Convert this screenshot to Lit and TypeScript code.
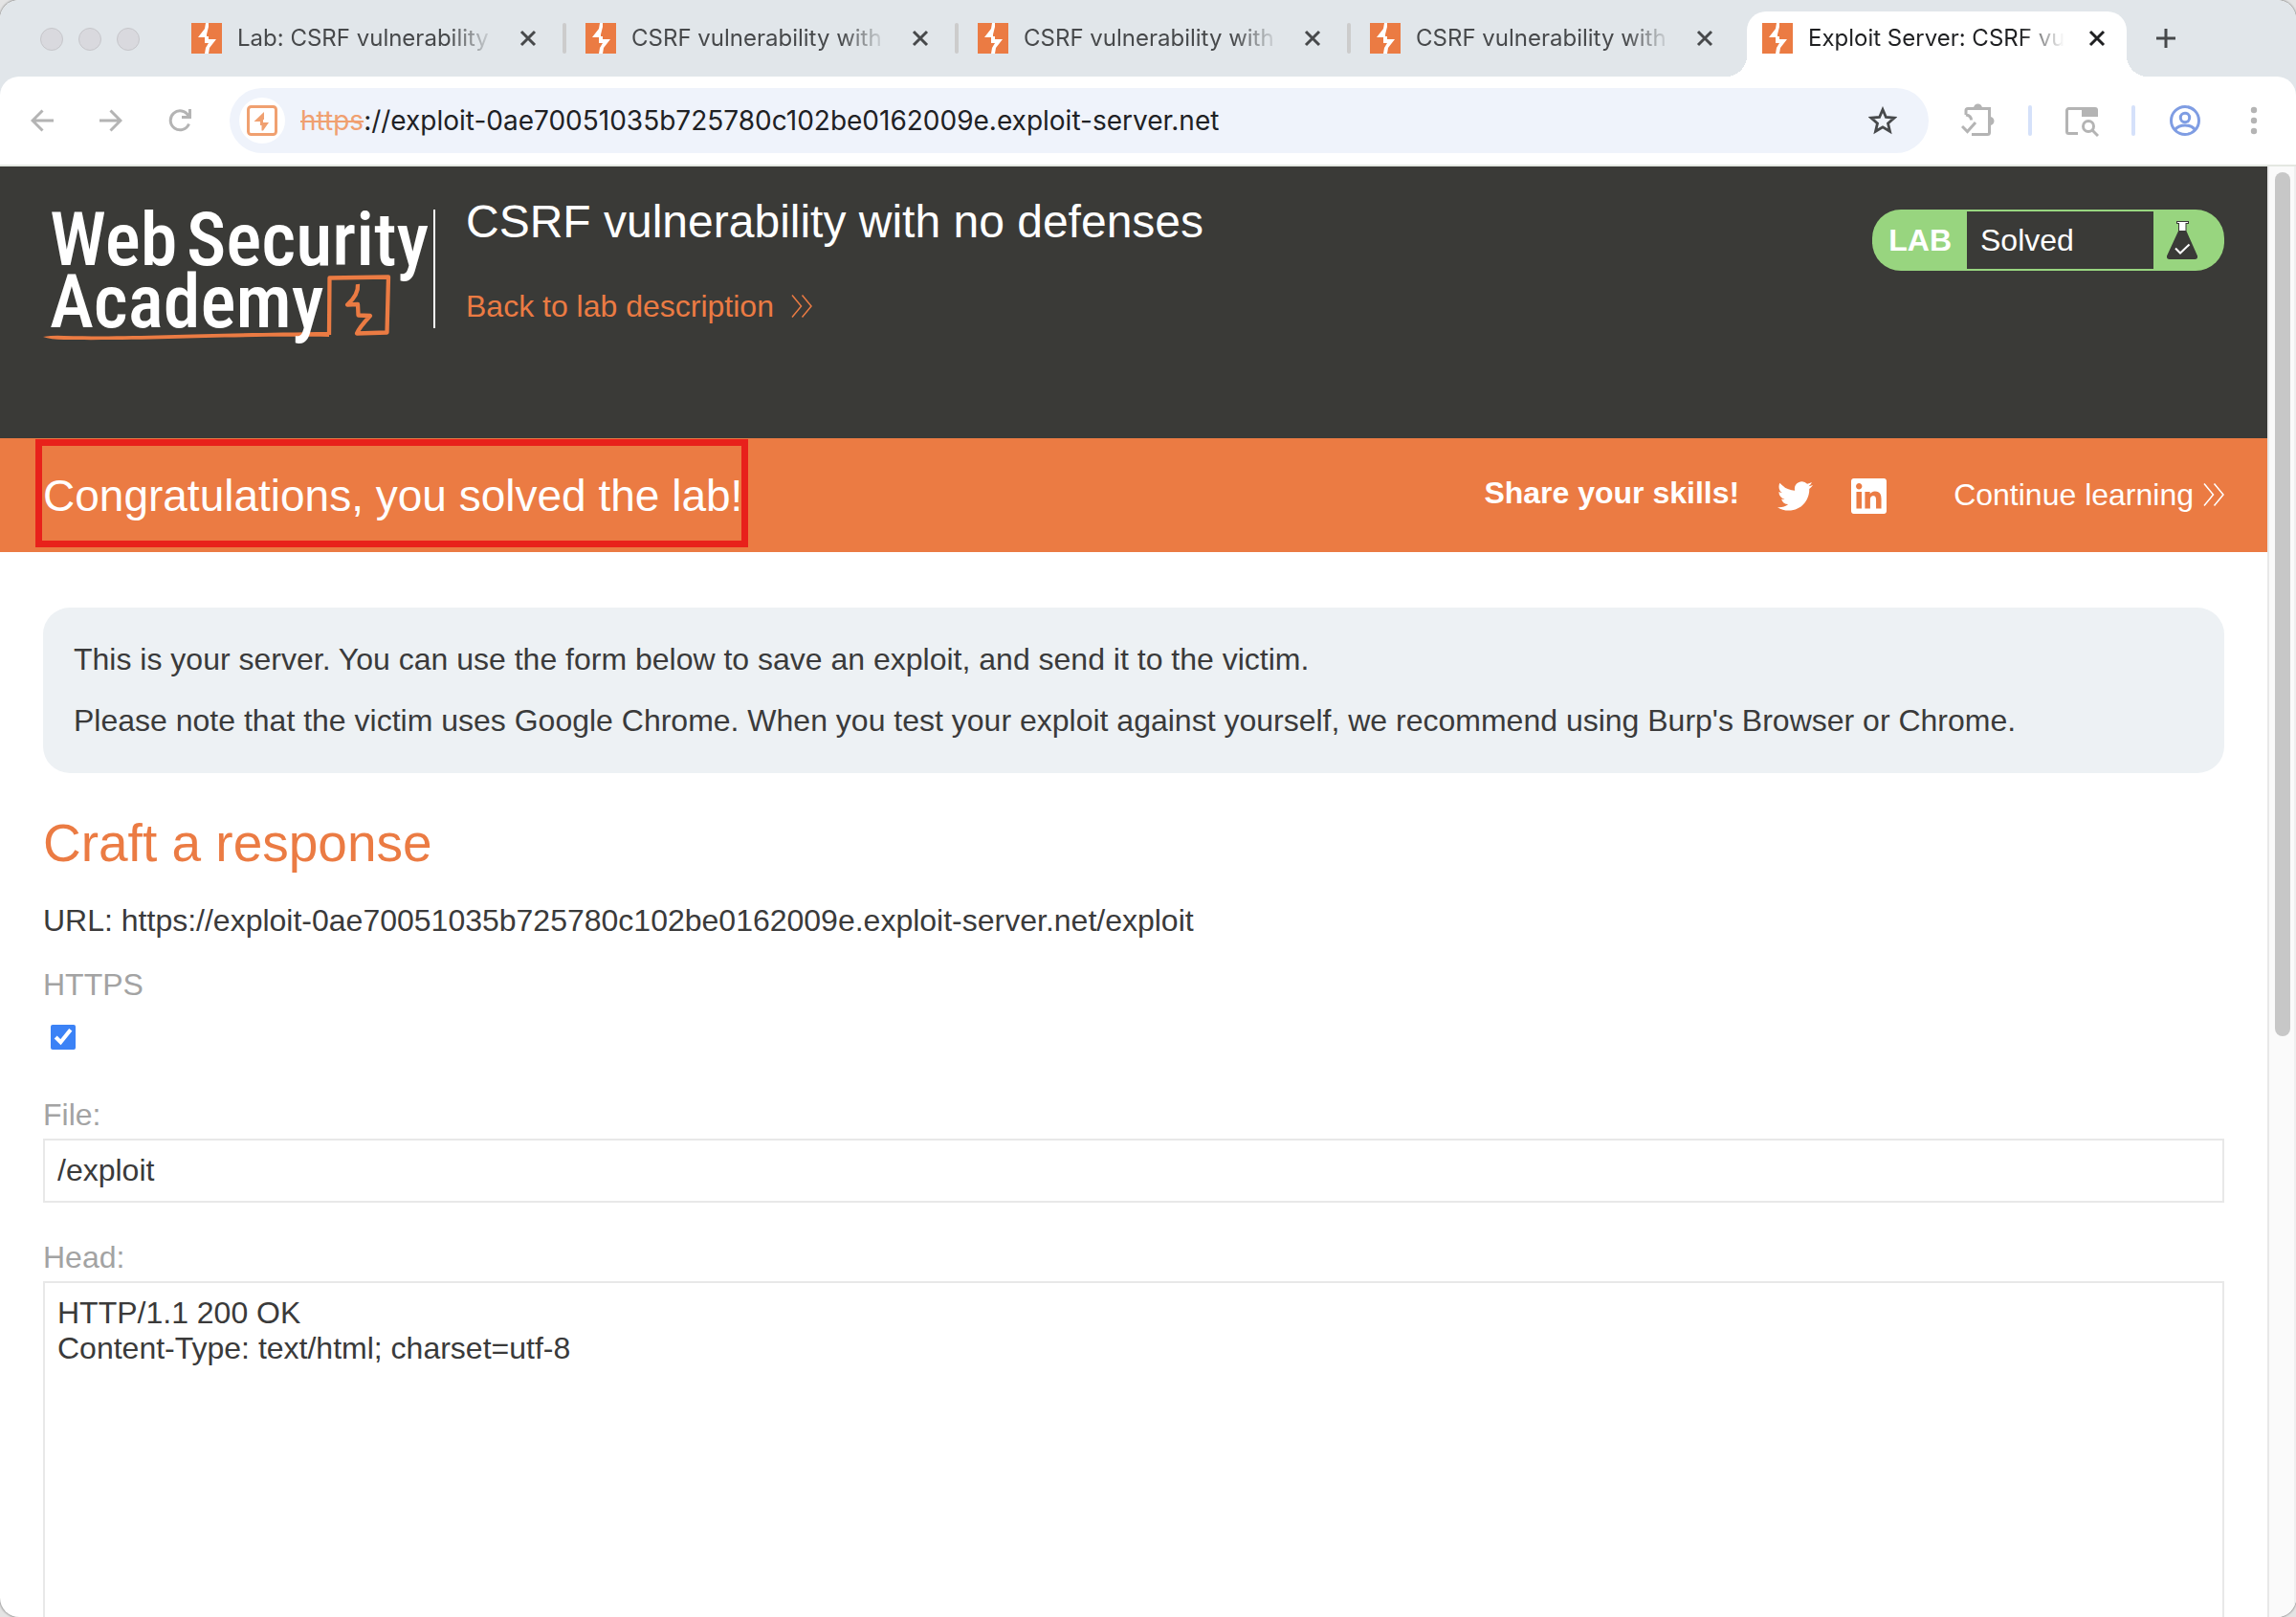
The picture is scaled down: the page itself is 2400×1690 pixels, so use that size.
import { LitElement, html, svg, css } from "lit";
import { customElement, state } from "lit/decorators.js";
import { classMap } from "lit/directives/class-map.js";

interface Tab {
  title: string;
}

const chevrons = html`<svg class="chevrons" viewBox="0 0 22 24" aria-hidden="true">
  <path d="M1 0.5 10.500 12 1 23.500M11.500 0.500 21 12 11.500 23.500" fill="none" stroke="currentColor" stroke-width="1.500" />
</svg>`;

@customElement("browser-tabs")
export class BrowserTabs extends LitElement {
  static styles = css`
    :host {
      display: block;
      background: #e1e6ea;
      font-family: Inter, "Liberation Sans", sans-serif;
    }
    .strip {
      display: flex;
      height: 80px;
      padding-left: 42px;
      box-sizing: border-box;
    }
    .lights {
      display: flex;
      gap: 16px;
      margin: 29px 36px 0 0;
    }
    .light {
      width: 24px;
      height: 24px;
      box-sizing: border-box;
      border: 1px solid #c6c6ca;
      border-radius: 50%;
      background: #d9d9de;
    }
    .tab {
      position: relative;
      display: flex;
      align-items: center;
      flex: 0 1 410px;
      min-width: 0;
      height: 68px;
      margin-top: 12px;
      padding: 0 0 12px 20px;
      box-sizing: border-box;
      color: #47494b;
    }
    .lights + .tab {
      padding-left: 18px;
    }
    .tab.active {
      color: #1f2022;
    }
    .shape {
      position: absolute;
      inset: 0 9px 0 4px;
      border-radius: 20px 20px 0 0;
      background: #fff;
    }
    .shape::before,
    .shape::after {
      content: "";
      position: absolute;
      bottom: 0;
      width: 22px;
      height: 22px;
    }
    .shape::before {
      left: -22px;
      background: radial-gradient(circle at 0 0, transparent 22px, #fff 22px);
    }
    .shape::after {
      right: -22px;
      background: radial-gradient(circle at 100% 0, transparent 22px, #fff 22px);
    }
    .favicon {
      position: relative;
      flex: none;
      width: 32px;
      height: 32px;
      margin-right: 16px;
    }
    .title {
      position: relative;
      flex: 1;
      min-width: 0;
      overflow: hidden;
      white-space: nowrap;
      font-size: 24px;
      line-height: 32px;
      -webkit-mask-image: linear-gradient(to right, #000 calc(100% - 48px), transparent);
      mask-image: linear-gradient(to right, #000 calc(100% - 48px), transparent);
    }
    button {
      position: relative;
      flex: none;
      display: block;
      padding: 0;
      border: 0;
      background: none;
      color: inherit;
    }
    .close {
      width: 20px;
      height: 20px;
      margin: 0 26px 0 24px;
    }
    .new {
      width: 20px;
      height: 20px;
      margin: 30px 0 0 22px;
      color: #47494b;
    }
    button svg {
      display: block;
      width: 20px;
      height: 20px;
    }
    .separator {
      flex: none;
      width: 4px;
      height: 32px;
      border-radius: 2px;
      background: #cccccc;
    }
    .hidden {
      background: none;
    }
  `;

  @state() private active = 4;

  private tabs: Tab[] = [
    { title: "Lab: CSRF vulnerability with" },
    { title: "CSRF vulnerability with no" },
    { title: "CSRF vulnerability with no" },
    { title: "CSRF vulnerability with no" },
    { title: "Exploit Server: CSRF vuln" },
  ];

  render() {
    return html`<div class="strip">
      <div class="lights"><span class="light"></span><span class="light"></span><span class="light"></span></div>
      ${this.tabs.map((tab, i) => {
        const active = i === this.active;
        return html`<div class=${classMap({ tab: true, active })} @click=${() => (this.active = i)}>
          ${active ? html`<span class="shape"></span>` : ""}
          <svg class="favicon" viewBox="0 0 32 32" aria-hidden="true">
            <path d="M0 0h32v32H0z" fill="#eb7b43" />
            <path d="M15 0h3v4l-2 8v2h2v3h8l-7 9-1 6h-4l1-6 3-5h-4v-6H7l7-9z" fill="#fff" />
          </svg>
          <span class="title">${tab.title}</span>
          <button class="close" aria-label="Close tab">
            <svg viewBox="0 0 20 20"><path d="M3 3l14 14M17 3 3 17" stroke="currentColor" stroke-width="3" /></svg>
          </button>
          <span class=${classMap({ separator: true, hidden: i >= this.active - 1 && i <= this.active })}></span>
        </div>`;
      })}
      <button class="new" aria-label="New tab">
        <svg viewBox="0 0 20 20"><path d="M10 0v20M0 10h20" stroke="currentColor" stroke-width="3" /></svg>
      </button>
    </div>`;
  }
}

@customElement("browser-toolbar")
export class BrowserToolbar extends LitElement {
  static styles = css`
    :host {
      display: block;
      background: #e1e6ea;
      font-family: Inter, "Liberation Sans", sans-serif;
    }
    .bar {
      display: flex;
      align-items: center;
      gap: 34px;
      padding: 12px 40px 12px 32px;
      border-bottom: 2px solid #e4e8e2;
      border-radius: 20px 20px 0 0;
      background: #fff;
    }
    .nav {
      display: flex;
      gap: 48px;
      margin-right: 6px;
      color: #b4b4b4;
    }
    button {
      display: block;
      flex: none;
      padding: 0;
      border: 0;
      background: none;
      color: #b4b4b4;
    }
    .nav button {
      width: 24px;
      height: 24px;
    }
    svg {
      display: block;
      width: 100%;
      height: 100%;
      fill: none;
      stroke: currentColor;
      stroke-width: 3;
    }
    .omnibox {
      display: flex;
      align-items: center;
      flex: 1;
      min-width: 0;
      height: 68px;
      padding: 0 33px 0 10px;
      box-sizing: border-box;
      border-radius: 34px;
      background: #eff3fb;
      font-size: 28px;
      line-height: 36px;
    }
    .site {
      width: 48px;
      height: 48px;
      margin-right: 16px;
      padding: 8px;
      box-sizing: border-box;
      border-radius: 50%;
      background: #fff;
      color: #f0a070;
    }
    .scheme {
      color: #f0a070;
      text-decoration: line-through;
      text-decoration-thickness: 2px;
    }
    .address {
      flex: 1;
      min-width: 0;
      padding: 0;
      border: 0;
      outline: 0;
      background: none;
      color: #202124;
      font: inherit;
    }
    .star {
      width: 30px;
      height: 30px;
      color: #47494b;
    }
    .extensions,
    .search {
      width: 36px;
      height: 36px;
    }
    .divider {
      width: 4px;
      height: 32px;
      border-radius: 2px;
      background: #d5e1fa;
    }
    .profile {
      width: 32px;
      height: 32px;
      margin-left: 2px;
      color: #7f9de3;
    }
    .menu {
      width: 8px;
      height: 32px;
      margin-left: 18px;
    }
    .solid {
      fill: currentColor;
      stroke: none;
    }
  `;

  render() {
    return html`<div class="bar">
      <div class="nav">
        <button aria-label="Back">
          <svg viewBox="0 0 24 24"><path d="M24 12H2M12.500 1.500 2 12l10.500 10.500" /></svg>
        </button>
        <button aria-label="Forward">
          <svg viewBox="0 0 24 24"><path d="M0 12h22M11.500 1.500 22 12 11.500 22.500" /></svg>
        </button>
        <button aria-label="Reload">
          <svg viewBox="0 0 24 24"><path d="M21.500 15.500A10 10 0 1 1 21 7M22.500 0v8.500H14" /></svg>
        </button>
      </div>
      <div class="omnibox">
        <button class="site" aria-label="View site information">
          <svg viewBox="0 0 32 32">
            <rect x="1.500" y="1.500" width="29" height="29" rx="3" />
            <path class="solid" d="M18 7v8h-1v3h6l-6 8.500h-1.500V21H14v-4H7.500z" />
          </svg>
        </button>
        <span class="scheme">https</span>
        <input class="address" aria-label="Address" value="://exploit-0ae70051035b725780c102be0162009e.exploit-server.net" />
        <button class="star" aria-label="Bookmark this page">
          <svg viewBox="0 0 30 30">
            <path d="M15 3.500l3.400 8 8.600.7-6.500 5.700 2 8.400-7.500-4.500-7.500 4.500 2-8.400L3 12.200l8.600-.7z" stroke-width="2.800" />
          </svg>
        </button>
      </div>
      <button class="extensions" aria-label="Extensions">
        <svg viewBox="0 0 36 36">
          <path d="M5 12V7.500a2 2 0 0 1 2-2h22.500v25a2 2 0 0 1-2 2H11M5 12c3 .5 5.500 2.500 5.500 5.500" />
          <path class="solid" d="M13 5a4.500 4.500 0 0 1 9 0zM30 14a4.500 4.500 0 0 1 0 9z" />
          <path d="M1 24l5.500 5.500L15 20" />
        </svg>
      </button>
      <span class="divider"></span>
      <button class="search" aria-label="Search tabs">
        <svg viewBox="0 0 36 36">
          <path d="M14 31.500H4.500a2 2 0 0 1-2-2v-22a2 2 0 0 1 2-2H32" />
          <path class="solid" d="M18 4h14a3 3 0 0 1 3 3v7H18z" />
          <circle cx="25" cy="24" r="5.500" />
          <path d="M29 28l6 6" />
        </svg>
      </button>
      <span class="divider"></span>
      <button class="profile" aria-label="Profile">
        <svg viewBox="0 0 32 32">
          <circle cx="16" cy="16" r="14.500" />
          <circle cx="16" cy="13" r="4.700" />
          <path d="M5.500 25.500c5-6 16-6 21 0" />
        </svg>
      </button>
      <button class="menu" aria-label="Menu">
        <svg viewBox="0 0 8 32">
          <g class="solid"><circle cx="4" cy="5" r="3.200" /><circle cx="4" cy="16" r="3.200" /><circle cx="4" cy="27" r="3.200" /></g>
        </svg>
      </button>
    </div>`;
  }
}

@customElement("lab-header")
export class LabHeader extends LitElement {
  static styles = css`
    :host {
      display: block;
      background: #3a3a37;
      color: #fff;
    }
    .header {
      display: flex;
      align-items: flex-start;
      min-height: 284px;
      padding: 30px 45px 0;
      box-sizing: border-box;
    }
    .logo {
      flex: none;
      display: flex;
      align-items: flex-start;
      margin-top: 15px;
    }
    .logo svg {
      display: block;
      width: 408px;
      height: 144px;
    }
    .logo text {
      fill: #fff;
      font-family: "Roboto Condensed", Roboto, sans-serif;
      font-weight: 500;
      font-size: 78px;
    }
    .rule {
      width: 2px;
      height: 124px;
      background: #fff;
    }
    .titles {
      flex: 1;
      min-width: 0;
      margin-left: 32px;
    }
    h2 {
      margin: 0 0 40px;
      font-size: 48px;
      font-weight: 400;
      line-height: 56px;
    }
    .back {
      display: inline-flex;
      align-items: center;
      gap: 18px;
      color: #eb7b43;
      text-decoration: none;
      line-height: 40px;
    }
    .chevrons {
      width: 22px;
      height: 24px;
    }
    .badge {
      flex: none;
      display: flex;
      align-items: center;
      height: 64px;
      margin-top: 15px;
      border-radius: 30px;
      background: #98d57f;
    }
    .lab {
      padding: 0 16px 0 17px;
      font-weight: 700;
    }
    .status {
      display: flex;
      align-items: center;
      width: 195px;
      height: 60px;
      padding-left: 14px;
      box-sizing: border-box;
      background: #3a3a37;
    }
    .flask {
      width: 32px;
      height: 40px;
      margin: 0 28px 0 14px;
    }
  `;

  render() {
    return html`<header class="header">
      <div class="logo">
        <svg viewBox="0 0 408 144" role="img" aria-label="Web Security Academy">
          <path d="M0 133q12-2 22-1c80 2 140-3 277-4v5c-130-1-170 4-277 3q-14 0-22-3z" fill="#eb7b43" />
          <path
            d="M299 131 L299.500 71.500 L361 70.500 L359.500 128.500 L328 129.500 Q330 124 342 111 L329.500 110.500 L329 99 L318 99.500 Q330 89 329 78"
            fill="none"
            stroke="#eb7b43"
            stroke-width="4.300"
            stroke-linejoin="round"
          />
          ${svg`<text x="7" y="58">Web</text><text x="150" y="58">Security</text><text x="7" y="123">Academy</text>`}
        </svg>
        <span class="rule"></span>
      </div>
      <div class="titles">
        <h2>CSRF vulnerability with no defenses</h2>
        <a class="back" href="#lab">Back to lab description ${chevrons}</a>
      </div>
      <div class="badge">
        <span class="lab">LAB</span>
        <span class="status">Solved</span>
        <svg class="flask" viewBox="0 0 32 40" aria-hidden="true">
          <path d="M10 0h13v3h-2.500v7.500L32 36.500q.5 3.500-2.500 3.500h-27q-3 0-2.500-3.500L12 10.500V3h-2z" fill="#3a3a37" />
          <path d="M11 1h11v1h-2.500v8h-6.500V2h-2z" fill="#fff" />
          <path d="M9 28.500l5 5L23.500 24.500" fill="none" stroke="#fff" stroke-width="2" />
        </svg>
      </div>
    </header>`;
  }
}

@customElement("lab-banner")
export class LabBanner extends LitElement {
  static styles = css`
    :host {
      display: block;
      background: #eb7b43;
      color: #fff;
    }
    .banner {
      display: flex;
      align-items: center;
      padding: 32px 45px 31px;
    }
    h3 {
      position: relative;
      margin: 0 auto 0 0;
      font-size: 46px;
      font-weight: 400;
      line-height: 56px;
    }
    .mark {
      position: absolute;
      inset: -31px -6px -26px -8px;
      border: 7px solid #e8211b;
    }
    .share {
      padding-bottom: 6px;
      font-weight: 700;
      line-height: 40px;
    }
    .social {
      display: flex;
      margin-left: 40px;
    }
    .social svg {
      width: 37px;
      height: 37px;
      fill: #fff;
    }
    .next {
      display: flex;
      align-items: center;
      gap: 10px;
      margin-left: 70px;
      padding-bottom: 2px;
      color: #fff;
      text-decoration: none;
      line-height: 40px;
    }
    .chevrons {
      width: 22px;
      height: 24px;
    }
  `;

  render() {
    return html`<section class="banner">
      <h3>Congratulations, you solved the lab!<span class="mark"></span></h3>
      <span class="share">Share your skills!</span>
      <a class="social" href="#twitter" aria-label="Share on Twitter">
        <svg viewBox="0 0 24 24">
          <path
            d="M23.953 4.57a10 10 0 01-2.825.775 4.958 4.958 0 002.163-2.723c-.951.555-2.005.959-3.127 1.184a4.92 4.92 0 00-8.384 4.482C7.69 8.095 4.067 6.13 1.64 3.162a4.822 4.822 0 00-.666 2.475c0 1.71.87 3.213 2.188 4.096a4.904 4.904 0 01-2.228-.616v.06a4.923 4.923 0 003.946 4.827 4.996 4.996 0 01-2.212.085 4.936 4.936 0 004.604 3.417 9.867 9.867 0 01-6.102 2.105c-.39 0-.779-.023-1.17-.067a13.995 13.995 0 007.557 2.209c9.053 0 13.998-7.496 13.998-13.985 0-.21 0-.42-.015-.63A9.935 9.935 0 0024 4.59z"
          />
        </svg>
      </a>
      <a class="social" href="#linkedin" aria-label="Share on LinkedIn">
        <svg viewBox="0 0 24 24">
          <path
            d="M20.447 20.452h-3.554v-5.569c0-1.328-.027-3.037-1.852-3.037-1.853 0-2.136 1.445-2.136 2.939v5.667H9.351V9h3.414v1.561h.046c.477-.9 1.637-1.85 3.37-1.85 3.601 0 4.267 2.37 4.267 5.455v6.286zM5.337 7.433c-1.144 0-2.063-.926-2.063-2.065 0-1.138.92-2.063 2.063-2.063 1.14 0 2.064.925 2.064 2.063 0 1.139-.925 2.065-2.064 2.065zm1.782 13.019H3.555V9h3.564v11.452zM22.225 0H1.771C.792 0 0 .774 0 1.729v20.542C0 23.227.792 24 1.771 24h20.451C23.2 24 24 23.227 24 22.271V1.729C24 .774 23.2 0 22.222 0h.003z"
          />
        </svg>
      </a>
      <a class="next" href="#next">Continue learning ${chevrons}</a>
    </section>`;
  }
}

@customElement("exploit-form")
export class ExploitForm extends LitElement {
  static styles = css`
    :host {
      display: block;
      padding: 58px 45px 0;
      color: #3a3a3a;
    }
    .info {
      display: flex;
      flex-direction: column;
      gap: 16px;
      padding: 30px 32px 31px;
      border-radius: 28px;
      background: #edf1f4;
      line-height: 48px;
    }
    p {
      margin: 0;
    }
    h1 {
      margin: 41px 0 29px;
      color: #eb7b43;
      font-size: 55px;
      font-weight: 400;
      line-height: 64px;
    }
    .url {
      margin-bottom: 27px;
      line-height: 40px;
    }
    label {
      display: block;
      width: fit-content;
      color: #a3a3a3;
      line-height: 40px;
    }
    .check {
      display: block;
      width: 26px;
      height: 26px;
      margin: 22px 8px 48px;
      accent-color: #3b82f6;
    }
    .field {
      display: block;
      width: 100%;
      box-sizing: border-box;
      margin: 5px 0 37px;
      padding: 13px;
      border: 2px solid #e8e8e8;
      border-radius: 0;
      outline: 0;
      background: #fff;
      color: inherit;
      font: inherit;
      line-height: 37px;
      resize: none;
    }
  `;

  render() {
    return html`<form>
      <div class="info">
        <p>This is your server. You can use the form below to save an exploit, and send it to the victim.</p>
        <p>Please note that the victim uses Google Chrome. When you test your exploit against yourself, we recommend using Burp's Browser or Chrome.</p>
      </div>
      <h1>Craft a response</h1>
      <p class="url">URL: https://exploit-0ae70051035b725780c102be0162009e.exploit-server.net/exploit</p>
      <label for="https">HTTPS</label>
      <input class="check" id="https" type="checkbox" checked />
      <label for="file">File:</label>
      <input class="field" id="file" type="text" value="/exploit" />
      <label for="head">Head:</label>
      <textarea class="field" id="head" rows="12" .value=${"HTTP/1.1 200 OK\nContent-Type: text/html; charset=utf-8"}></textarea>
    </form>`;
  }
}

@customElement("app-root")
export class AppRoot extends LitElement {
  static styles = css`
    :host {
      display: block;
      height: 100vh;
      background: #e4e4e4;
      font-family: "Liberation Sans", Arial, sans-serif;
      font-size: 32px;
    }
    .window {
      display: flex;
      flex-direction: column;
      height: 100%;
      overflow: hidden;
      border-radius: 20px;
      background: #fff;
      box-shadow: 0 0 2px 1px #9a9a9a;
    }
    .view {
      display: flex;
      flex: 1;
      min-height: 0;
    }
    .page {
      flex: 1;
      min-width: 0;
      overflow: hidden;
    }
    .scrollbar {
      flex: none;
      width: 30px;
      box-sizing: border-box;
      padding: 6px 4px 5px 6px;
      border-left: 2px solid #e8e8e8;
      border-right: 2px solid #efefef;
      background: #fafafa;
    }
    .thumb {
      height: 60%;
      border-radius: 8px;
      background: #c7c7c7;
    }
  `;

  render() {
    return html`<div class="window">
      <browser-tabs></browser-tabs>
      <browser-toolbar></browser-toolbar>
      <div class="view">
        <main class="page">
          <lab-header></lab-header>
          <lab-banner></lab-banner>
          <exploit-form></exploit-form>
        </main>
        <div class="scrollbar"><div class="thumb"></div></div>
      </div>
    </div>`;
  }
}
